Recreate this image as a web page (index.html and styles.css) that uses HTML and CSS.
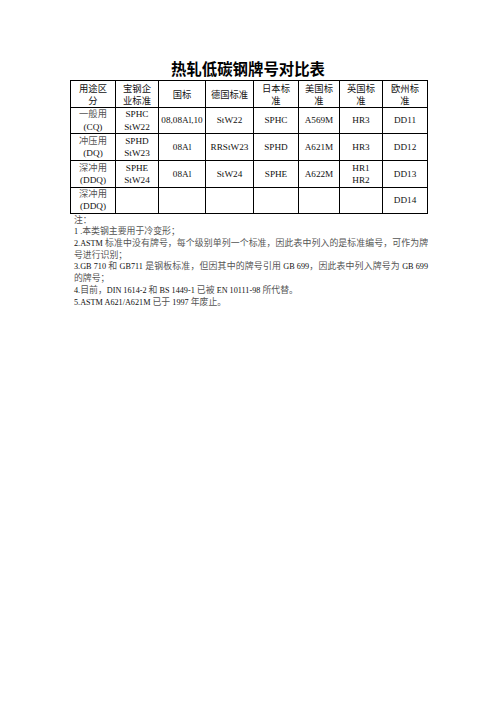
FILE: index.html
```html
<!DOCTYPE html>
<html lang="zh-CN">
<head>
<meta charset="utf-8">
<title>热轧低碳钢牌号对比表</title>
<link rel="stylesheet" href="styles.css">
</head>
<body>
<div class="page">
  <h1 class="title">热轧低碳钢牌号对比表</h1>
  <table class="grid">
    <colgroup>
      <col class="c1"><col class="c2"><col class="c3"><col class="c4">
      <col class="c5"><col class="c6"><col class="c7"><col class="c8">
    </colgroup>
    <tr class="head">
      <td class="cn">用途区<br>分</td>
      <td class="cn">宝钢企<br>业标准</td>
      <td class="cn">国标</td>
      <td class="cn">德国标准</td>
      <td class="cn">日本标<br>准</td>
      <td class="cn">美国标<br>准</td>
      <td class="cn">英国标<br>准</td>
      <td class="cn">欧州标<br>准</td>
    </tr>
    <tr class="r1">
      <td><span class="cn">一般用</span><br>(CQ)</td>
      <td>SPHC<br>StW22</td>
      <td>08,08Al,10</td>
      <td>StW22</td>
      <td>SPHC</td>
      <td>A569M</td>
      <td>HR3</td>
      <td>DD11</td>
    </tr>
    <tr class="r2">
      <td><span class="cn">冲压用</span><br>(DQ)</td>
      <td>SPHD<br>StW23</td>
      <td>08Al</td>
      <td>RRStW23</td>
      <td>SPHD</td>
      <td>A621M</td>
      <td>HR3</td>
      <td>DD12</td>
    </tr>
    <tr class="r3">
      <td><span class="cn">深冲用</span><br>(DDQ)</td>
      <td>SPHE<br>StW24</td>
      <td>08Al</td>
      <td>StW24</td>
      <td>SPHE</td>
      <td>A622M</td>
      <td>HR1<br>HR2</td>
      <td>DD13</td>
    </tr>
    <tr class="r4">
      <td><span class="cn">深冲用</span><br>(DDQ)</td>
      <td></td>
      <td></td>
      <td></td>
      <td></td>
      <td></td>
      <td></td>
      <td>DD14</td>
    </tr>
  </table>
  <div class="notes">
    <p><span class="cn">注：</span></p>
    <p>1 .<span class="cn">本类钢主要用于冷变形；</span></p>
    <p>2.ASTM <span class="cn">标准中没有牌号，每个级别单列一个标准，因此表中列入的是标准编号，可作为牌号进行识别；</span></p>
    <p>3.GB 710 <span class="cn">和</span> GB711 <span class="cn">是钢板标准，但因其中的牌号引用</span> GB 699<span class="cn">，因此表中列入牌号为</span> GB 699 <span class="cn">的牌号；</span></p>
    <p>4.<span class="cn">目前，</span>DIN 1614-2 <span class="cn">和</span> BS 1449-1 <span class="cn">已被</span> EN 10111-98 <span class="cn">所代替。</span></p>
    <p>5.ASTM A621/A621M <span class="cn">已于</span> 1997 <span class="cn">年废止。</span></p>
  </div>
</div>
</body>
</html>
```

FILE: styles.css
```css
html, body {
  margin: 0;
  padding: 0;
  background: #ffffff;
}

body {
  font-family: "Liberation Serif", "Noto Sans CJK SC", serif;
  color: #111111;
}

.page {
  width: 356px;
  margin-left: 70px;
  padding-top: 57px;
}

.title {
  margin: 0;
  text-align: center;
  font-family: "Noto Sans CJK SC", sans-serif;
  font-weight: 700;
  font-size: 15.4px;
  line-height: 22px;
  color: #000000;
}

.grid {
  border-collapse: collapse;
  table-layout: fixed;
  width: 357px;
  margin-top: 1px;
  font-size: 9.2px;
}

.c1 { width: 45px; }
.c2 { width: 43px; }
.c3 { width: 47px; }
.c4 { width: 48px; }
.c5 { width: 45px; }
.c6 { width: 41px; }
.c7 { width: 43px; }
.c8 { width: 45px; }

.grid td {
  border: 1px solid #000000;
  padding: 0 1px;
  text-align: center;
  vertical-align: middle;
  line-height: 12.3px;
  color: #111111;
}

.grid .head td { height: 26px; }
.grid .r1 td { height: 25px; }
.grid .r2 td { height: 26px; }
.grid .r3 td { height: 26px; }
.grid .r4 td { height: 24px; }

.cn {
  font-family: "Noto Sans CJK SC", sans-serif;
  color: #555555;
}

.grid .cn {
  font-size: 9.3px;
}

.grid td .cn {
  line-height: 9px;
}

.notes {
  margin-left: 4px;
  width: 354px;
  font-size: 8.2px;
  line-height: 11.7px;
  margin-top: 1px;
}

.notes p {
  margin: 0;
  text-align: justify;
}

.notes .cn {
  font-size: 8.9px;
  line-height: 8px;
}
```
